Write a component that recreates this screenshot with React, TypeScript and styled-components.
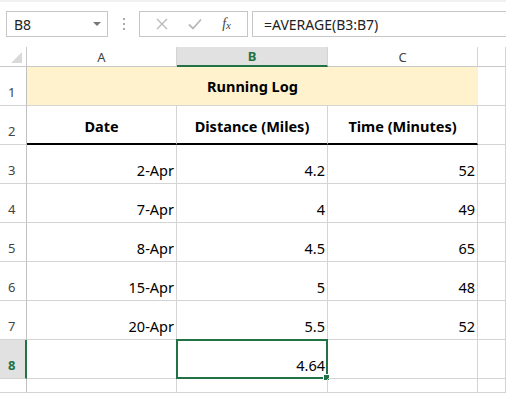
import { Fragment } from 'react';
import { createGlobalStyle, styled } from 'styled-components';

const GlobalStyle = createGlobalStyle`
  html, body {
    margin: 0;
    padding: 0;
    background: #fff;
    font-family: "Noto Sans", "Open Sans", sans-serif;
  }
`;

const Page = styled.div`
  width: 506px;
  height: 393px;
  overflow: hidden;
  background: #fff;
`;

const Toolbar = styled.div`
  height: 47px;
  box-sizing: border-box;
  border-top: 2px solid #f1f1f1;
  display: flex;
  align-items: flex-start;
  padding: 9px 0 0 6px;
`;

const NameBox = styled.div`
  width: 102px;
  height: 26px;
  box-sizing: border-box;
  border: 1px solid #c6c6c6;
  display: flex;
  align-items: center;
  justify-content: space-between;
  padding: 0 6px 0 7px;
  font-size: 14px;
  color: #222;
`;

const DropArrow = styled.span`
  width: 0;
  height: 0;
  border-left: 4px solid transparent;
  border-right: 4px solid transparent;
  border-top: 4px solid #777;
`;

const Grip = styled.div`
  width: 31px;
  height: 26px;
  display: flex;
  flex-direction: column;
  align-items: center;
  justify-content: center;
  gap: 3px;
`;

const Dot = styled.span`
  width: 2px;
  height: 2px;
  background: #aaa;
`;

const ButtonBox = styled.div`
  width: 109px;
  height: 26px;
  box-sizing: border-box;
  border: 1px solid #c6c6c6;
  display: flex;
  align-items: center;
  justify-content: space-around;
  padding: 0 6px;
`;

const FxLabel = styled.span`
  font-family: "Liberation Serif", serif;
  font-style: italic;
  font-size: 14px;
  color: #444;
`;

const FxSub = styled.span`
  font-size: 11px;
  position: relative;
  top: 1px;
`;

const FormulaInput = styled.div`
  flex: 1;
  height: 26px;
  box-sizing: border-box;
  margin-left: 4px;
  border: 1px solid #c6c6c6;
  border-right: none;
  display: flex;
  align-items: center;
  padding-left: 11px;
  font-size: 14px;
  color: #222;
`;

const Grid = styled.div`
  display: grid;
  grid-template-columns: 27px 150px 151px 150px 1fr;
  grid-template-rows: 20px repeat(8, 39px) 1fr;
  height: 346px;
`;

const Corner = styled.div`
  position: relative;
  border-right: 1px solid #c8c8c8;
  border-bottom: 1px solid #c8c8c8;
  &::after {
    content: '';
    position: absolute;
    right: 4px;
    bottom: 3px;
    width: 0;
    height: 0;
    border-left: 11px solid transparent;
    border-bottom: 11px solid #d9d9d9;
  }
`;

const ColHead = styled.div<{ $active?: boolean }>`
  display: flex;
  align-items: center;
  justify-content: center;
  font-size: 13px;
  color: ${(p) => (p.$active ? '#217346' : '#444')};
  font-weight: ${(p) => (p.$active ? 700 : 400)};
  background: ${(p) => (p.$active ? '#e1e1e1' : '#fff')};
  border-right: 1px solid #d4d4d4;
  border-bottom: ${(p) => (p.$active ? '2px solid #217346' : '1px solid #c8c8c8')};
  box-sizing: border-box;
`;

const RowHead = styled.div<{ $active?: boolean }>`
  display: flex;
  align-items: flex-end;
  padding: 0 0 4px 8px;
  font-size: 13px;
  color: ${(p) => (p.$active ? '#217346' : '#444')};
  font-weight: ${(p) => (p.$active ? 700 : 400)};
  background: ${(p) => (p.$active ? '#e1e1e1' : '#fff')};
  border-right: ${(p) => (p.$active ? '2px solid #217346' : '1px solid #c0c0c0')};
  border-bottom: 1px solid #d4d4d4;
  box-sizing: border-box;
`;

const Title = styled.div`
  grid-column: 2 / span 3;
  display: flex;
  align-items: center;
  justify-content: center;
  background: #fff2cc;
  border-bottom: 1px solid #d4d4d4;
  font-size: 14.5px;
  font-weight: 700;
  color: #000;
`;

const Cell = styled.div<{ $head?: boolean; $thick?: boolean }>`
  position: relative;
  display: flex;
  align-items: flex-end;
  justify-content: ${(p) => (p.$head ? 'center' : 'flex-end')};
  padding: 0 2px ${(p) => (p.$head ? '7px' : '3px')} 2px;
  font-size: 14.5px;
  font-weight: ${(p) => (p.$head ? 700 : 400)};
  color: #000;
  border-right: 1px solid #d4d4d4;
  border-bottom: ${(p) => (p.$thick ? '2px solid #000' : '1px solid #d4d4d4')};
  box-sizing: border-box;
`;

const Selection = styled.div`
  position: absolute;
  left: -1px;
  top: -1px;
  right: -1px;
  bottom: -1px;
  border: 2px solid #217346;
  pointer-events: none;
  &::after {
    content: '';
    position: absolute;
    right: -4px;
    bottom: -4px;
    width: 5px;
    height: 5px;
    background: #217346;
    border: 1px solid #fff;
  }
`;

const CellText = styled.span`
  position: relative;
  z-index: 1;
`;

const rows = [
  ['2-Apr', '4.2', '52'],
  ['7-Apr', '4', '49'],
  ['8-Apr', '4.5', '65'],
  ['15-Apr', '5', '48'],
  ['20-Apr', '5.5', '52'],
];

export default function App() {
  return (
    <Page>
      <GlobalStyle />
      <Toolbar>
        <NameBox>
          B8
          <DropArrow />
        </NameBox>
        <Grip>
          <Dot />
          <Dot />
          <Dot />
        </Grip>
        <ButtonBox>
          <svg width="12" height="12" viewBox="0 0 12 12">
            <path d="M1 1 L11 11 M11 1 L1 11" stroke="#b8b8b8" strokeWidth="1.3" fill="none" />
          </svg>
          <svg width="14" height="12" viewBox="0 0 14 12">
            <path d="M1 6.5 L5 10.5 L13 1.5" stroke="#b8b8b8" strokeWidth="1.8" fill="none" />
          </svg>
          <FxLabel>
            f<FxSub>x</FxSub>
          </FxLabel>
        </ButtonBox>
        <FormulaInput>=AVERAGE(B3:B7)</FormulaInput>
      </Toolbar>
      <Grid>
        <Corner />
        <ColHead>A</ColHead>
        <ColHead $active>B</ColHead>
        <ColHead>C</ColHead>
        <ColHead />

        <RowHead>1</RowHead>
        <Title>Running Log</Title>
        <Cell />

        <RowHead>2</RowHead>
        <Cell $head $thick>Date</Cell>
        <Cell $head $thick>Distance (Miles)</Cell>
        <Cell $head $thick>Time (Minutes)</Cell>
        <Cell />

        {rows.map((r, i) => (
          <Fragment key={i}>
            <RowHead>{i + 3}</RowHead>
            <Cell>{r[0]}</Cell>
            <Cell>{r[1]}</Cell>
            <Cell>{r[2]}</Cell>
            <Cell />
          </Fragment>
        ))}

        <RowHead $active>8</RowHead>
        <Cell />
        <Cell>
          <Selection />
          <CellText>4.64</CellText>
        </Cell>
        <Cell />
        <Cell />

        <RowHead />
        <Cell />
        <Cell />
        <Cell />
        <Cell />
      </Grid>
    </Page>
  );
}
